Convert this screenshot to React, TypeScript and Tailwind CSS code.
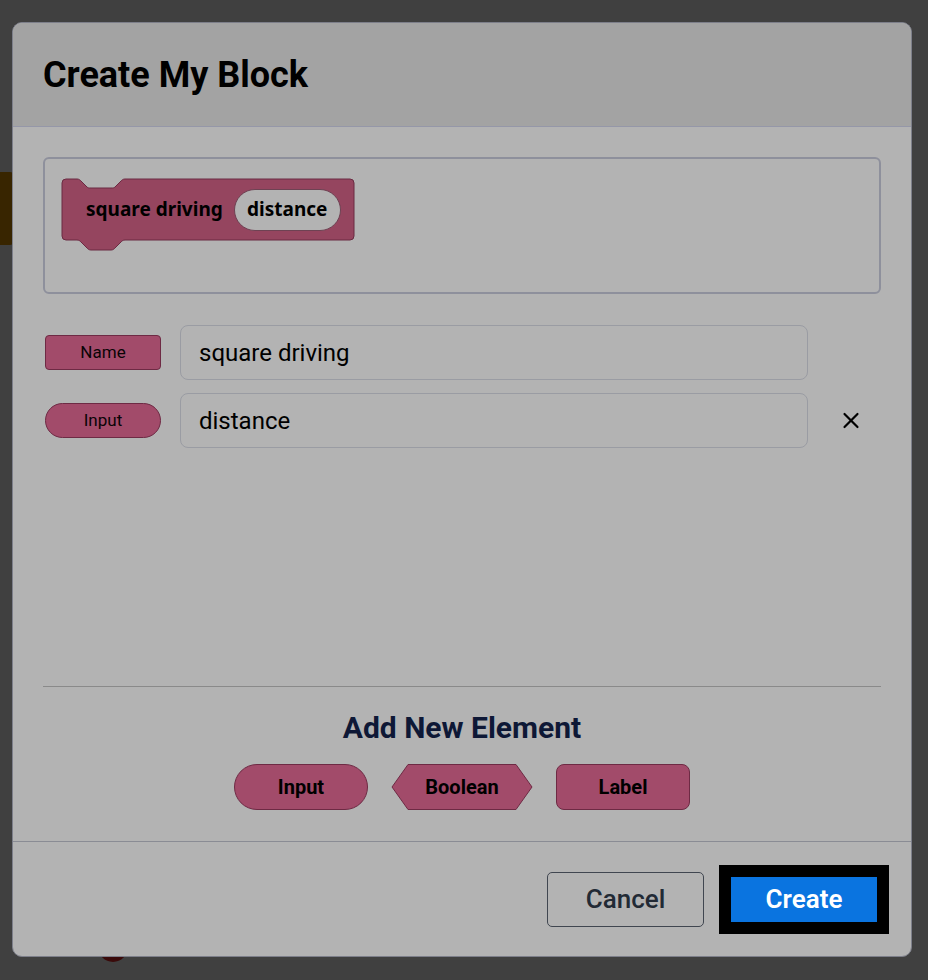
import { X } from 'lucide-react';

const roboto = { fontFamily: 'Roboto, "Liberation Sans", sans-serif' };

const BlockPreview = () => (
  <div className="relative w-[294px] h-[74px]">
    <svg className="absolute left-0 top-0" width="294" height="74" viewBox="0 0 294 74">
      <path
        transform="translate(1 1)"
        d="M 0 4 Q 0 0 4 0 L 15 0 C 17 0 18 1 19 2 L 25 8 C 26 9 27 9 29 9 L 49 9 C 51 9 52 9 53 8 L 59 2 C 60 1 61 0 63 0 L 288 0 Q 292 0 292 4 L 292 57 Q 292 61 288 61 L 63 61 C 61 61 60 62 59 63 L 53 69 C 52 70 51 71 49 71 L 29 71 C 27 71 26 70 25 69 L 19 63 C 18 62 17 61 15 61 L 4 61 Q 0 61 0 57 Z"
        fill="#95455f"
        stroke="#6b2a42"
        strokeWidth="1"
      />
    </svg>
    <div
      className="relative flex h-[63px] items-center gap-[11px] pl-[25px] text-[19px] font-bold text-black"
      style={{ fontFamily: '"Noto Sans", "DejaVu Sans", sans-serif' }}
    >
      <span>square driving</span>
      <span className="flex h-[42px] w-[107px] items-center justify-center rounded-full border border-[#6e4253] bg-[#b3b3b3]">
        distance
      </span>
    </div>
  </div>
);

const Row = ({ label, value, round, removable }: { label: string; value: string; round?: boolean; removable?: boolean }) => (
  <div className="flex items-center">
    <div
      className={`ml-[2px] flex h-[35px] w-[116px] items-center justify-center border border-[#6e2a44] bg-[#a24b6a] text-[17px] text-[#0a0406] ${
        round ? 'rounded-full' : 'rounded-[4px]'
      }`}
    >
      {label}
    </div>
    <input
      readOnly
      value={value}
      className="ml-[19px] h-[55px] w-[628px] rounded-[8px] border border-[#9a9ca3] bg-transparent pl-[18px] text-[24px] text-black outline-none"
      style={roboto}
    />
    {removable && (
      <button className="ml-[30px] flex h-[26px] w-[26px] items-center justify-center text-black">
        <X size={27} strokeWidth={2} />
      </button>
    )}
  </div>
);

export default function App() {
  return (
    <div className="relative min-h-screen w-full overflow-hidden bg-[#404040] pl-[12px] pt-[22px]" style={roboto}>
      <div className="absolute left-[-30px] top-[172px] h-[73px] w-[50px] rounded-[10px] bg-[#382500]" />
      <div className="absolute left-[98px] top-[940px] h-[22px] w-[30px] rounded-b-full bg-[#3a0a0a]" />

      <div className="relative flex h-[935px] w-[900px] flex-col overflow-hidden rounded-[10px] border border-[#7d7f8a] bg-[#b3b3b3]">
        <div className="flex h-[104px] shrink-0 items-center border-b border-[#9597a8] bg-[#a3a3a3] px-[30px]">
          <h1 className="text-[36px] font-bold leading-none text-black">Create My Block</h1>
        </div>

        <div className="flex flex-1 flex-col px-[30px] pt-[30px]">
          <div className="h-[137px] rounded-[6px] border-2 border-[#8e909c] pl-[16px] pt-[19px]">
            <BlockPreview />
          </div>

          <div className="mt-[31px] flex flex-col gap-[13px]">
            <Row label="Name" value="square driving" />
            <Row label="Input" value="distance" round removable />
          </div>

          <div className="flex-1" />

          <div className="h-px bg-[#8a8a8a]" />
          <h2 className="mt-[26px] text-center text-[30px] font-bold leading-none text-[#0e1836]">Add New Element</h2>
          <div className="mt-[21px] mb-[31px] flex justify-center gap-[23px] text-[20px] font-bold text-black">
            <button className="h-[46px] w-[134px] rounded-full border border-[#6e2a44] bg-[#a24b6a]">Input</button>
            <button className="relative flex h-[46px] w-[142px] items-center justify-center">
              <svg className="absolute left-0 top-0" width="142" height="46" viewBox="0 0 142 46">
                <polygon points="1,23 17,0.5 125,0.5 141,23 125,45.5 17,45.5" fill="#a24b6a" stroke="#6e2a44" strokeWidth="1" />
              </svg>
              <span className="relative">Boolean</span>
            </button>
            <button className="h-[46px] w-[134px] rounded-[8px] border border-[#6e2a44] bg-[#a24b6a]">Label</button>
          </div>
        </div>

        <div className="flex h-[115px] shrink-0 items-center justify-end gap-[15px] border-t border-[#8a8c94] pr-[22px]">
          <button className="h-[55px] w-[157px] rounded-[5px] border border-[#404650] text-[26px] font-medium text-[#222a35]">
            Cancel
          </button>
          <button className="h-[69px] w-[170px] border-[12px] border-black bg-[#0a74e0] text-[26px] font-semibold text-white">
            Create
          </button>
        </div>
      </div>
    </div>
  );
}
